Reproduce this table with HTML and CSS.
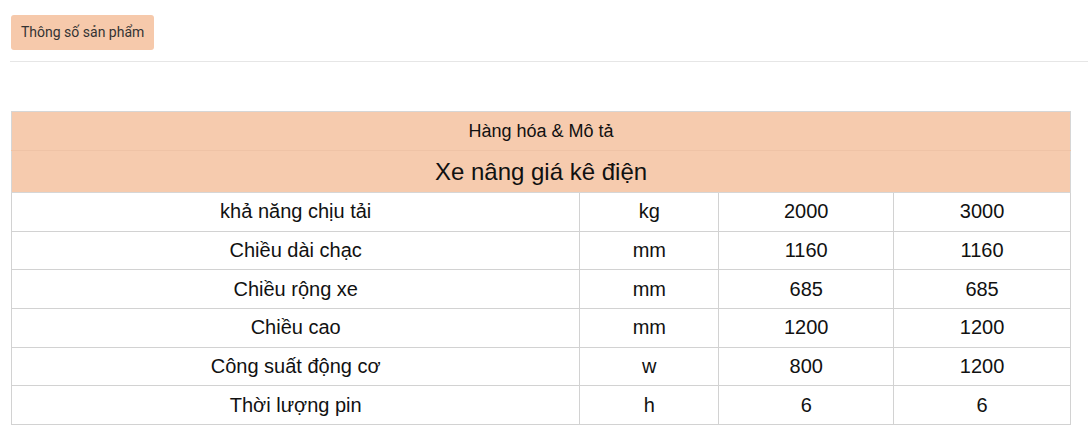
FILE: index.html
```html
<!DOCTYPE html>
<html lang="vi">
<head>
<meta charset="utf-8">
<link rel="stylesheet" href="styles.css">
</head>
<body>
<div class="page">
  <div class="tabs">
    <span class="tab">Thông số sản phẩm</span>
  </div>
  <div class="content">
    <table class="spec">
      <colgroup>
        <col class="c1"><col class="c2"><col class="c3"><col class="c4">
      </colgroup>
      <thead>
        <tr class="h1"><th colspan="4">Hàng hóa &amp; Mô tả</th></tr>
        <tr class="h2"><th colspan="4">Xe nâng giá kê điện</th></tr>
      </thead>
      <tbody>
        <tr><td>khả năng chịu tải</td><td>kg</td><td>2000</td><td>3000</td></tr>
        <tr><td>Chiều dài chạc</td><td>mm</td><td>1160</td><td>1160</td></tr>
        <tr><td>Chiều rộng xe</td><td>mm</td><td>685</td><td>685</td></tr>
        <tr><td>Chiều cao</td><td>mm</td><td>1200</td><td>1200</td></tr>
        <tr><td>Công suất động cơ</td><td>w</td><td>800</td><td>1200</td></tr>
        <tr><td>Thời lượng pin</td><td>h</td><td>6</td><td>6</td></tr>
      </tbody>
    </table>
  </div>
</div>
</body>
</html>
```
FILE: styles.css
```css
html, body {
  margin: 0;
  padding: 0;
  background: #ffffff;
}
.page {
  padding: 15px 0 0 10px;
}
.tabs {
  padding-left: 1px;
  padding-bottom: 11px;
  border-bottom: 1px solid #e6e6e6;
}
.tab {
  display: inline-block;
  background: #f6c9ab;
  color: #333;
  font-family: Roboto, "Liberation Sans", sans-serif;
  font-size: 14px;
  line-height: 35px;
  height: 35px;
  padding: 0 10px;
  border-radius: 3px;
}
.content {
  padding: 49px 0 0 1px;
}
.spec {
  width: 1060px;
  border-collapse: collapse;
  font-family: "Liberation Sans", Arial, sans-serif;
  color: #111;
  text-align: center;
}
.c1 { width: 569px; }
.c2 { width: 139px; }
.c3 { width: 175px; }
.c4 { width: 177px; }
.spec th {
  background: #f6cbae;
  font-weight: normal;
  border: 1px solid #d6d6d6;
  padding: 0;
}
.h1 th {
  height: 38px;
  font-size: 18px;
  border-bottom: 1px solid #efc3a6;
}
.h2 th {
  height: 41px;
  font-size: 24px;
  border-top: 1px solid #efc3a6;
}
.spec td {
  border: 1px solid #d2d2d2;
  height: 37.67px;
  padding: 0;
  font-size: 20px;
}
```
